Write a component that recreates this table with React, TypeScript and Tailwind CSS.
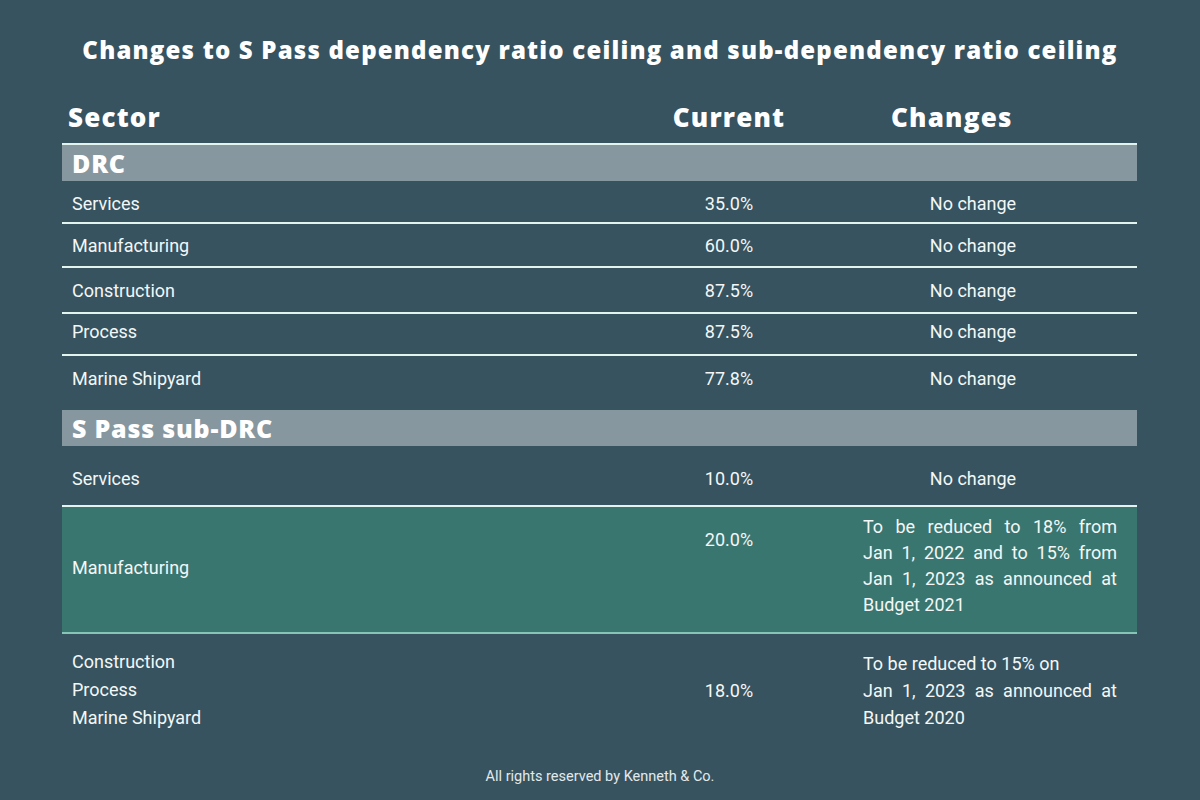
const body = { fontFamily: 'Roboto, "Liberation Sans", sans-serif' }
const head = { fontFamily: '"Open Sans", "DejaVu Sans", sans-serif' }

const drcRows = [
	{ sector: 'Services', current: '35.0%', h: 'h-[41px] pt-[4px]' },
	{ sector: 'Manufacturing', current: '60.0%', h: 'h-[42px]' },
	{ sector: 'Construction', current: '87.5%', h: 'h-[44px]' },
	{ sector: 'Process', current: '87.5%', h: 'h-[40px] pb-[6px]' },
	{ sector: 'Marine Shipyard', current: '77.8%', h: 'h-[44px]' },
]

const Line = ({ color = 'bg-[#e3f3ee]' }: { color?: string }) => <div className={`h-[2px] ${color}`} />

const Band = ({ label }: { label: string }) => (
	<div className="h-[36px] bg-[#87979f] flex items-center pl-[10px]">
		<span className="text-[25px] font-extrabold text-white leading-none tracking-[0.8px]" style={head}>{label}</span>
	</div>
)

const Justified = ({ lines }: { lines: string[] }) => (
	<div className="w-[254px] text-[18px] leading-[26px]">
		{lines.map((l, i) => (
			<div key={i} className={i < lines.length - 1 ? 'text-justify [text-align-last:justify]' : ''}>{l}</div>
		))}
	</div>
)

export default function App() {
	return (
		<div className="w-[1200px] h-[800px] bg-[#36535f] text-white flex flex-col" style={body}>
			<div className="h-[100px] flex items-center justify-center">
				<h1 className="text-[24px] font-extrabold tracking-[1.2px]" style={head}>
					Changes to S Pass dependency ratio ceiling and sub-dependency ratio ceiling
				</h1>
			</div>

			<div className="mx-[62px] w-[1075px]">
				{/* 表頭 */}
				<div className="h-[43px] pb-[9px] grid grid-cols-[580px_174px_321px] items-center text-[26px] leading-none font-extrabold tracking-[1.2px]" style={head}>
					<div className="pl-[6px]">Sector</div>
					<div className="text-center">Current</div>
					<div className="pl-[75px]">Changes</div>
				</div>
				<Line />
				<Band label="DRC" />

				{drcRows.map((r, i) => (
					<div key={r.sector}>
						<div className={`${r.h} grid grid-cols-[580px_174px_321px] items-center text-[18px] text-[#f3f7f7]`}>
							<div className="pl-[10px]">{r.sector}</div>
							<div className="text-center">{r.current}</div>
							<div className="text-center pr-[7px]">No change</div>
						</div>
						{i < drcRows.length - 1 && <Line />}
					</div>
				))}

				<div className="h-[10px]" />
				<Band label="S Pass sub-DRC" />

				<div className="h-[59px] pt-[5px] grid grid-cols-[580px_174px_321px] items-center text-[18px] text-[#f3f7f7]">
					<div className="pl-[10px]">Services</div>
					<div className="text-center">10.0%</div>
					<div className="text-center pr-[7px]">No change</div>
				</div>
				<Line />

				<div className="h-[125px] bg-[#3a7670] grid grid-cols-[580px_174px_321px] text-[18px] text-[#f3f7f7]">
					<div className="pl-[10px] flex items-center pb-[4px]">Manufacturing</div>
					<div className="text-center pt-[20px] leading-[26px]">20.0%</div>
					<div className="pl-[47px] pt-[7px]">
						<Justified
							lines={[
								'To be reduced to 18% from',
								'Jan 1, 2022 and to 15% from',
								'Jan 1, 2023 as announced at',
								'Budget 2021',
							]}
						/>
					</div>
				</div>
				<Line color="bg-[#86c4b6]" />

				<div className="h-[112px] grid grid-cols-[580px_174px_321px] items-center text-[18px] text-[#f3f7f7]">
					<div className="pl-[10px] leading-[28px]">
						<div>Construction</div>
						<div>Process</div>
						<div>Marine Shipyard</div>
					</div>
					<div className="text-center">18.0%</div>
					<div className="pl-[47px]">
						<div className="text-[18px] leading-[27px]">To be reduced to 15% on</div>
						<div className="w-[254px] text-[18px] leading-[27px]">
							<div className="text-justify [text-align-last:justify]">Jan 1, 2023 as announced at</div>
							<div>Budget 2020</div>
						</div>
					</div>
				</div>
			</div>

			<div className="flex-1 flex items-center justify-center pt-[8px] text-[14.5px] text-[#e3e9eb]">
				All rights reserved by Kenneth &amp; Co.
			</div>
		</div>
	)
}
